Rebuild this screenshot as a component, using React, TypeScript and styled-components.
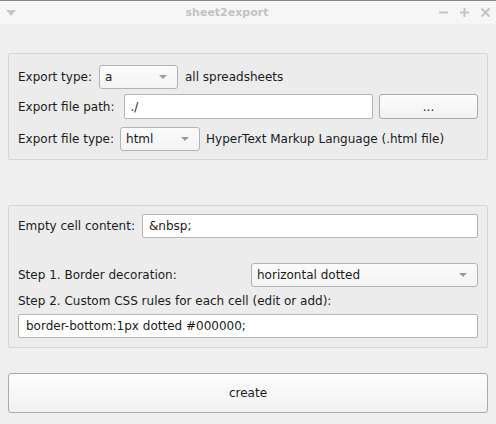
import React from "react";
import styled, { createGlobalStyle } from "styled-components";

const Global = createGlobalStyle`
  html, body { margin: 0; padding: 0; }
  body {
    width: 496px;
    height: 424px;
    overflow: hidden;
    background: #efefef;
    font-family: "DejaVu Sans", "Liberation Sans", sans-serif;
    font-size: 12px;
    color: #1b1b1b;
  }
`;

const Window = styled.div`
  width: 496px;
  height: 424px;
  display: flex;
  flex-direction: column;
  background: #efefef;
`;

const TitleBar = styled.div`
  height: 23px;
  border-top: 1px solid #8a8a8a;
  background: #f6f6f6;
  display: flex;
  align-items: center;
  padding: 0 5px 0 6px;
`;

const Title = styled.div`
  flex: 1;
  text-align: center;
  font-weight: bold;
  font-size: 11px;
  color: #c2c2c2;
`;

const TitleIcons = styled.div`
  display: flex;
  gap: 10px;
  align-items: center;
`;

const Content = styled.div`
  display: flex;
  flex-direction: column;
  padding: 29px 8px 0 8px;
`;

const Group = styled.div<{ $h: number; $mt?: number }>`
  height: ${(p) => p.$h}px;
  margin-top: ${(p) => p.$mt ?? 0}px;
  box-sizing: border-box;
  border: 1px solid #d6d6d6;
  border-radius: 2px;
  background: #ececec;
  display: flex;
  flex-direction: column;
  padding: 0 9px 0 9px;
`;

const Row = styled.div<{ $h: number; $mt: number }>`
  display: flex;
  align-items: center;
  height: ${(p) => p.$h}px;
  margin-top: ${(p) => p.$mt}px;
  white-space: nowrap;
`;

const Label = styled.span<{ $w?: number }>`
  ${(p) => (p.$w ? `width: ${p.$w}px;` : "")}
  flex-shrink: 0;
`;

const Combo = styled.div<{ $w?: number; $flex?: boolean; $ml: number }>`
  box-sizing: border-box;
  height: 100%;
  ${(p) => (p.$flex ? "flex: 1;" : `width: ${p.$w}px;`)}
  margin-left: ${(p) => p.$ml}px;
  border: 1px solid #b3b3b3;
  border-radius: 3px;
  background: linear-gradient(#fbfbfb, #f3f3f3);
  display: flex;
  align-items: center;
  padding: 0 10px 0 5px;
  justify-content: space-between;
`;

const Arrow = styled.span`
  width: 0;
  height: 0;
  border-left: 4px solid transparent;
  border-right: 4px solid transparent;
  border-top: 4px solid #9a9a9a;
`;

const Input = styled.div<{ $ml: number; $pl: number }>`
  box-sizing: border-box;
  flex: 1;
  height: 100%;
  margin-left: ${(p) => p.$ml}px;
  border: 1px solid #b5b5b5;
  border-radius: 2px;
  background: #ffffff;
  display: flex;
  align-items: center;
  padding-left: ${(p) => p.$pl}px;
`;

const Button = styled.div<{ $w?: number; $h: number; $ml?: number; $mt?: number }>`
  box-sizing: border-box;
  ${(p) => (p.$w ? `width: ${p.$w}px;` : "")}
  height: ${(p) => p.$h}px;
  margin-left: ${(p) => p.$ml ?? 0}px;
  margin-top: ${(p) => p.$mt ?? 0}px;
  border: 1px solid #aaaaaa;
  border-radius: 3px;
  background: linear-gradient(#fdfdfd, #f1f1f1);
  display: flex;
  align-items: center;
  justify-content: center;
  flex-shrink: 0;
`;

const After = styled.span<{ $ml: number }>`
  margin-left: ${(p) => p.$ml}px;
`;

export default function App() {
  return (
    <Window>
      <Global />
      <TitleBar>
        <svg width="10" height="6" viewBox="0 0 10 6">
          <path d="M0 0 H10 L5 6 Z" fill="#c8c8c8" />
        </svg>
        <Title>sheet2export</Title>
        <TitleIcons>
          <svg width="11" height="11" viewBox="0 0 11 11">
            <path d="M1 5.5 H10" stroke="#c4c4c4" strokeWidth="2" />
          </svg>
          <svg width="11" height="11" viewBox="0 0 11 11">
            <path d="M1 5.5 H10 M5.5 1 V10" stroke="#c4c4c4" strokeWidth="2" />
          </svg>
          <svg width="11" height="11" viewBox="0 0 11 11">
            <path d="M1.5 1.5 L9.5 9.5 M9.5 1.5 L1.5 9.5" stroke="#c4c4c4" strokeWidth="2" />
          </svg>
        </TitleIcons>
      </TitleBar>
      <Content>
        <Group $h={107}>
          <Row $h={24} $mt={11}>
            <Label>Export type:</Label>
            <Combo $w={79} $ml={7}>
              <span>a</span>
              <Arrow />
            </Combo>
            <After $ml={7}>all spreadsheets</After>
          </Row>
          <Row $h={25} $mt={5}>
            <Label>Export file path:</Label>
            <Input $ml={9} $pl={6}>./</Input>
            <Button $w={99} $h={25} $ml={6}>...</Button>
          </Row>
          <Row $h={24} $mt={8}>
            <Label>Export file type:</Label>
            <Combo $w={80} $ml={6}>
              <span>html</span>
              <Arrow />
            </Combo>
            <After $ml={6}>HyperText Markup Language (.html file)</After>
          </Row>
        </Group>
        <Group $h={143} $mt={45}>
          <Row $h={24} $mt={8}>
            <Label>Empty cell content:</Label>
            <Input $ml={7} $pl={6}>&amp;nbsp;</Input>
          </Row>
          <Row $h={24} $mt={25}>
            <Label $w={233}>Step 1. Border decoration:</Label>
            <Combo $flex $ml={0}>
              <span>horizontal dotted</span>
              <Arrow />
            </Combo>
          </Row>
          <Row $h={20} $mt={4}>
            <Label>Step 2. Custom CSS rules for each cell (edit or add):</Label>
          </Row>
          <Row $h={24} $mt={3}>
            <Input $ml={0} $pl={7}>border-bottom:1px dotted #000000;</Input>
          </Row>
        </Group>
        <Button $h={40} $mt={25}>create</Button>
      </Content>
    </Window>
  );
}
